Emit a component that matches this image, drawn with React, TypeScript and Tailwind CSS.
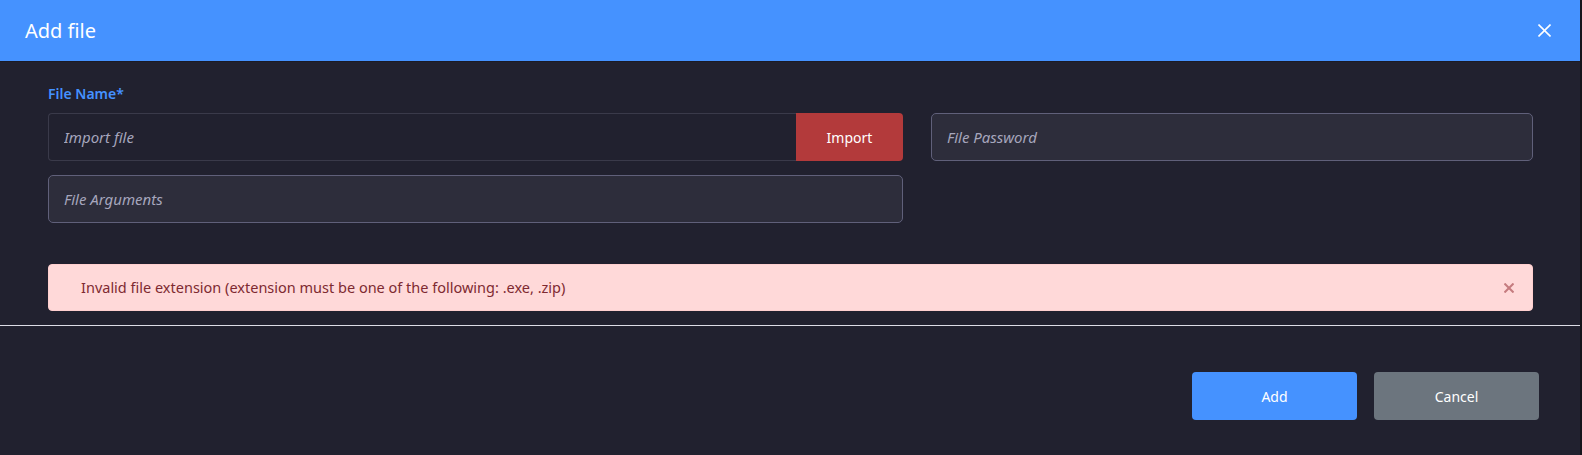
import React from "react";

const CloseIcon = ({ size, stroke, width }: { size: number; stroke: string; width: number }) => (
  <svg width={size} height={size} viewBox={`0 0 ${size} ${size}`} fill="none">
    <line x1="0.5" y1="0.5" x2={size - 0.5} y2={size - 0.5} stroke={stroke} strokeWidth={width} />
    <line x1={size - 0.5} y1="0.5" x2="0.5" y2={size - 0.5} stroke={stroke} strokeWidth={width} />
  </svg>
);

const AddFileModal = () => {
  return (
    <div className="w-[1582px] h-[455px] bg-[#21212f] border-r-2 border-[#15151c] font-['Noto_Sans',sans-serif] overflow-hidden">
      {/* header */}
      <div className="h-[62px] bg-[#4592ff] flex items-center justify-between pl-[25px] pr-[29px] border-b border-[#1b1b26]">
        <h2 className="text-white text-[20px] leading-none">Add file</h2>
        <button className="text-white">
          <CloseIcon size={13} stroke="#ffffff" width={1.6} />
        </button>
      </div>

      {/* body */}
      <div className="pt-[22px] px-[47px] pl-[48px] pb-[14px]">
        <div className="grid grid-cols-[855px_1fr] gap-x-[28px]">
          <label className="text-[14px] leading-[20px] font-semibold text-[#4592ff] mb-[9px]">
            File Name*
          </label>
          <div />

          <div className="flex h-[48px]">
            <input
              className="flex-1 min-w-0 bg-[#21212f] border border-r-0 border-[#3a3a4a] rounded-l-[4px] pl-[15px] text-[15px] text-white outline-none placeholder:italic placeholder:text-[#a6a6bd]"
              placeholder="Import file"
            />
            <button className="w-[107px] bg-[#b33a3b] rounded-r-[4px] text-white text-[14px]">
              Import
            </button>
          </div>
          <input
            className="h-[48px] bg-[#2d2d3b] border border-[#60607a] rounded-[5px] pl-[15px] text-[15px] text-white outline-none placeholder:italic placeholder:text-[#a6a6bd]"
            placeholder="File Password"
          />

          <input
            className="mt-[14px] h-[48px] bg-[#2d2d3b] border border-[#60607a] rounded-[5px] pl-[15px] text-[15px] text-white outline-none placeholder:italic placeholder:text-[#a6a6bd]"
            placeholder="File Arguments"
          />
          <div />
        </div>

        {/* alert */}
        <div className="mt-[41px] h-[47px] bg-[#ffd9d9] border border-[#ffcfcf] rounded-[4px] flex items-center justify-between pl-[32px] pr-[18px]">
          <span className="text-[14.5px] text-[#7e2a31]">
            Invalid file extension (extension must be one of the following: .exe, .zip)
          </span>
          <button>
            <CloseIcon size={10} stroke="#c57b7f" width={2} />
          </button>
        </div>
      </div>

      {/* footer */}
      <div className="border-t border-[#dcdce6] pt-[46px] pr-[41px] flex justify-end gap-[17px]">
        <button className="w-[165px] h-[48px] rounded-[4px] bg-[#4592ff] text-white text-[14px]">
          Add
        </button>
        <button className="w-[165px] h-[48px] rounded-[4px] bg-[#6c757e] text-white text-[14px]">
          Cancel
        </button>
      </div>
    </div>
  );
};

export default function App() {
  return <AddFileModal />;
}
